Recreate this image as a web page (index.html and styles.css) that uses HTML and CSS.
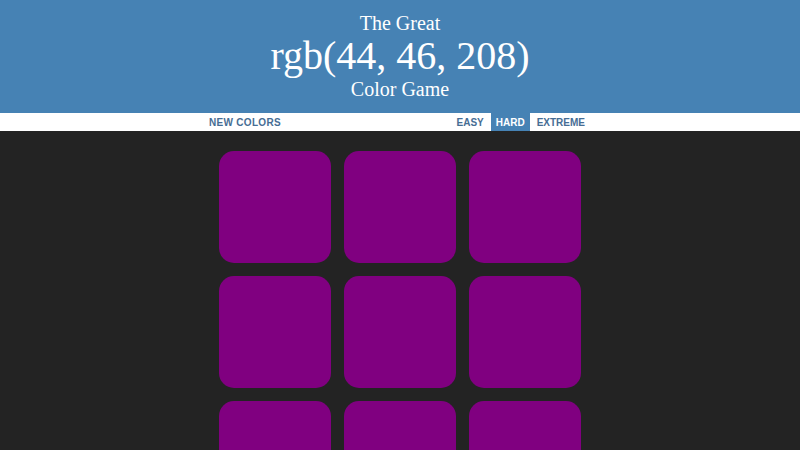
FILE: index.html
```html
<!doctype html>
<html lang="en">
  <head>
    <meta charset="UTF-8" />
    <meta name="viewport" content="width=device-width, initial-scale=1" />
    <title>The Great RGB Color Game</title>
    <link rel="stylesheet" href="styles.css">
  </head>
  <body>
    <h1 class="title">
      <span class="title-line">The Great</span>
      <span class="title-rgb" id="colorDisplay">rgb(44, 46, 208)</span>
      <span class="title-line">Color Game</span>
    </h1>

    <!-- reset + difficulty -->
    <div class="stripe">
      <div class="stripe-inner">
        <button type="button" id="reset">New Colors</button>
        <span id="message"></span>
        <div class="modes">
          <button type="button" class="mode">Easy</button>
          <button type="button" class="mode selected">Hard</button>
          <button type="button" class="mode">Extreme</button>
        </div>
      </div>
    </div>

    <div class="board" id="board">
      <div class="square"></div>
      <div class="square"></div>
      <div class="square"></div>
      <div class="square"></div>
      <div class="square"></div>
      <div class="square"></div>
      <div class="square"></div>
      <div class="square"></div>
      <div class="square"></div>
    </div>
  </body>
</html>
```

FILE: styles.css
```css
body {
  margin: 0;
  background-color: #232323;
  font-family: "Liberation Sans", Arial, sans-serif;
}
.title {
  margin: 0;
  padding: 12px 0 13px;
  background: steelblue;
  color: #fff;
  text-align: center;
  font-family: "Liberation Serif", "Times New Roman", serif;
  font-weight: normal;
  font-size: 20px;
  line-height: 1.1;
}
.title-line,
.title-rgb {
  display: block;
}
.title-rgb {
  font-size: 200%;
}
.stripe {
  background: #fff;
  height: 18px;
}
.stripe-inner {
  width: 392px;
  height: 100%;
  margin: 0 auto;
  padding-right: 6px;
  box-sizing: border-box;
  display: flex;
  justify-content: space-between;
}
.modes {
  display: flex;
  gap: 2px;
}
button {
  border: none;
  background: none;
  height: 100%;
  padding: 0 5px;
  margin: 0;
  text-transform: uppercase;
  font-family: inherit;
  font-weight: 700;
  font-size: 10px;
  color: #466d94;
  cursor: pointer;
  outline: none;
}
#reset {
  letter-spacing: 0.3px;
}
button:hover,
.selected {
  background: steelblue;
  color: #fff;
}
.board {
  width: 362px;
  margin: 20px auto;
  display: grid;
  grid-template-columns: repeat(3, 112px);
  grid-auto-rows: 112px;
  gap: 13px;
}
.square {
  background: purple;
  border-radius: 15px;
}
```
